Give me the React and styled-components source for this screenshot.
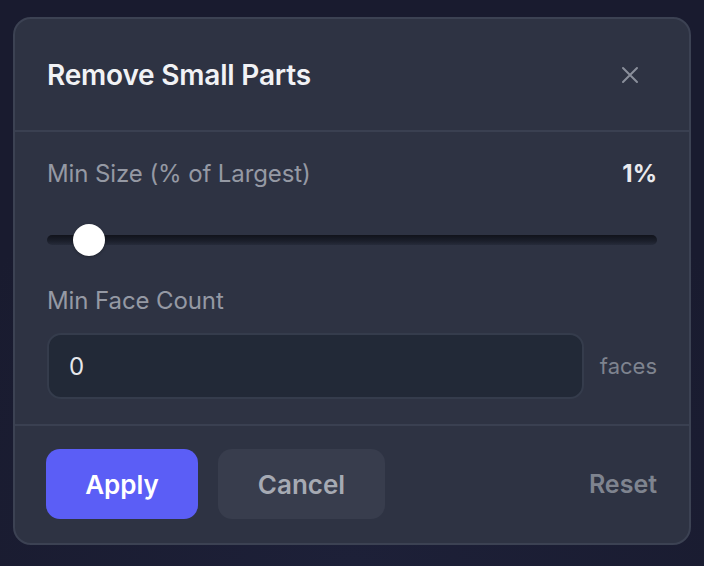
import React, { useState } from 'react';
import styled, { createGlobalStyle } from 'styled-components';

const GlobalStyle = createGlobalStyle`
  html, body {
    margin: 0;
    background: #1a1c31;
    font-family: Inter, 'Noto Sans', 'Liberation Sans', sans-serif;
  }
  * { box-sizing: border-box; }
`

const Page = styled.div`
  width: 704px;
  height: 566px;
  padding: 17px 13px 21px 13px;
  background: radial-gradient(circle at 50% 100%, #1d2038 0%, #191b2f 70%);
`

const Dialog = styled.div`
  height: 100%;
  background: #2e3343;
  border: 2px solid #3c4253;
  border-radius: 18px;
  display: flex;
  flex-direction: column;
  overflow: hidden;
`

const Header = styled.div`
  display: flex;
  align-items: center;
  justify-content: space-between;
  padding: 41px 41px 40px 32px;
  border-bottom: 2px solid #3a4051;
`

const Title = styled.h2`
  margin: 0;
  color: #f1f2f5;
  font-size: 28px;
  line-height: 30px;
  font-weight: 600;
  letter-spacing: -0.2px;
`

const CloseButton = styled.button`
  width: 36px;
  height: 30px;
  display: flex;
  align-items: center;
  justify-content: center;
  background: none;
  border: none;
  padding: 0;
  cursor: pointer;
  color: #8a8f9b;
`

const Body = styled.div`
  display: flex;
  flex-direction: column;
  padding: 28px 32px 25px 32px;
  border-bottom: 2px solid #3a4051;
`

const LabelRow = styled.div`
  display: flex;
  align-items: center;
  justify-content: space-between;
  margin-top: ${p => p.$top || 0}px;
  line-height: 28px;
`

const Label = styled.span`
  color: #9599a4;
  font-size: 24px;
  letter-spacing: -0.1px;
`

const Value = styled.span`
  color: #e9eaee;
  font-size: 24px;
  font-weight: 700;
`

const SliderWrap = styled.div`
  position: relative;
  height: 32px;
  margin-top: 36px;
  display: flex;
  align-items: center;
`

const Track = styled.div`
  width: 100%;
  height: 10px;
  border-radius: 5px;
  background: linear-gradient(180deg, #11131b 0%, #1b1f2b 60%, #262b3a 100%);
`

const Thumb = styled.div`
  position: absolute;
  top: 0;
  width: 32px;
  height: 32px;
  margin-left: -16px;
  border-radius: 50%;
  background: #ffffff;
  box-shadow: 0 1px 3px rgba(0, 0, 0, 0.3);
`

const InputRow = styled.div`
  display: flex;
  align-items: center;
  gap: 16px;
  margin-top: 18px;
`

const NumberInput = styled.input`
  flex: 1;
  height: 66px;
  padding: 0 20px;
  border-radius: 14px;
  border: 2px solid #353c4c;
  background: #222937;
  color: #e6e7eb;
  font-family: inherit;
  font-size: 24px;
  outline: none;
`

const Unit = styled.span`
  color: #7e838f;
  font-size: 22px;
`

const Footer = styled.div`
  display: flex;
  align-items: center;
  gap: 20px;
  padding: 23px 32px 23px 31px;
`

const Button = styled.button`
  height: 70px;
  min-width: ${p => p.$width}px;
  border: none;
  border-radius: 14px;
  font-family: inherit;
  font-size: 26px;
  font-weight: 600;
  color: ${p => p.$primary ? '#ffffff' : '#a6aab3'};
  background: ${p => p.$primary ? '#5b5ef6' : '#383d4d'};
  cursor: pointer;
`

const ResetButton = styled.button`
  margin-left: auto;
  background: none;
  border: none;
  padding: 0;
  font-family: inherit;
  font-size: 25px;
  font-weight: 600;
  color: #7f848f;
  cursor: pointer;
`

const App = () => {
  const [size] = useState(1)
  const [faces, setFaces] = useState('0')

  return (
    <Page>
      <GlobalStyle />
      <Dialog>
        <Header>
          <Title>Remove Small Parts</Title>
          <CloseButton aria-label="Close">
            <svg width="20" height="20" viewBox="0 0 20 20" fill="none" stroke="currentColor" strokeWidth="2" strokeLinecap="round">
              <path d="M3 3 L17 17 M17 3 L3 17" />
            </svg>
          </CloseButton>
        </Header>
        <Body>
          <LabelRow>
            <Label>Min Size (% of Largest)</Label>
            <Value>{ size }%</Value>
          </LabelRow>
          <SliderWrap>
            <Track />
            <Thumb style={{ left: `calc(${42 / 610 * 100}%)` }} />
          </SliderWrap>
          <LabelRow $top={31}>
            <Label>Min Face Count</Label>
          </LabelRow>
          <InputRow>
            <NumberInput value={ faces } onChange={ e => setFaces(e.target.value) } />
            <Unit>faces</Unit>
          </InputRow>
        </Body>
        <Footer>
          <Button $primary $width={152}>Apply</Button>
          <Button $width={167}>Cancel</Button>
          <ResetButton>Reset</ResetButton>
        </Footer>
      </Dialog>
    </Page>
  )
}

export default App
